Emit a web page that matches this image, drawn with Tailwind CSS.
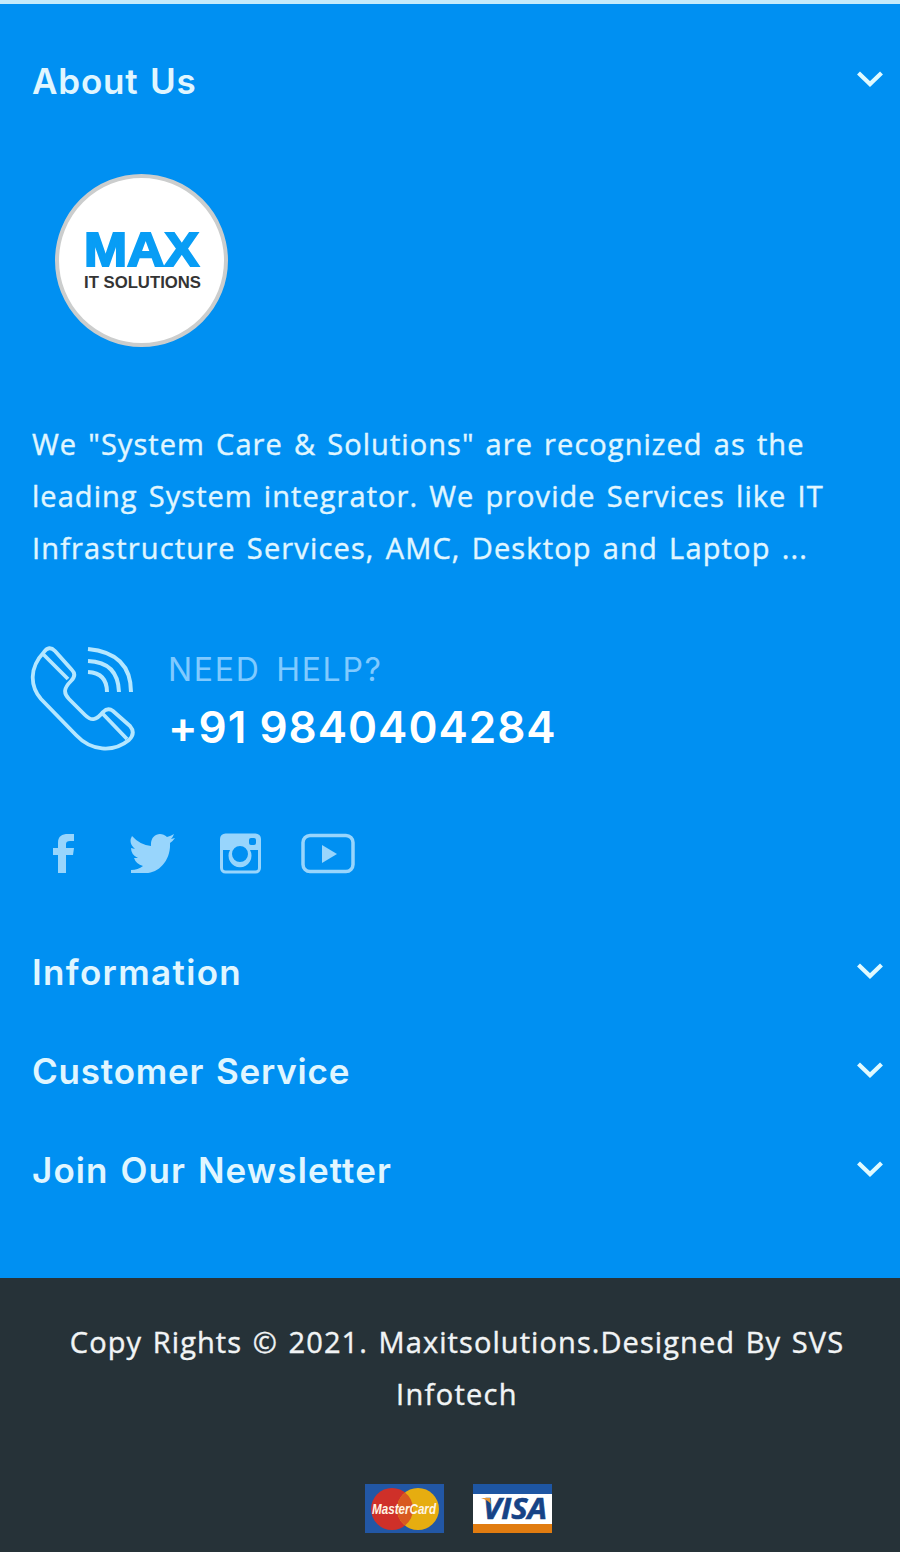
<!DOCTYPE html>
<html lang="en">
<head>
<meta charset="utf-8">
<title>Max IT Solutions</title>
<script src="https://cdn.jsdelivr.net/npm/@tailwindcss/browser@4"></script>
</head>
<body class="w-[900px] h-[1552px] overflow-hidden bg-[#0090f2] font-['Open_Sans',sans-serif] text-[#e0f6ff]">
<footer class="flex h-full flex-col border-t-4 border-[#c5ebfb]">
  <section class="flex h-[1274px] flex-col">
    <div class="mt-[49px] flex h-14 items-center justify-between pl-8 pr-4">
      <h2 class="whitespace-nowrap font-['Inter',sans-serif] text-[35px] font-semibold tracking-[0.8px] [word-spacing:2px]">About Us</h2>
      <svg class="mb-1 h-7 w-7" viewBox="0 0 28 28" fill="none" stroke="#e0faff" stroke-width="4.2"><path d="M2.500 8 14 19 25.500 8"/></svg>
    </div>
    <div class="ml-[55px] mt-[65px] flex h-[173px] w-[173px] flex-col items-center justify-center rounded-full border-4 border-[#cbcdcd] bg-white">
      <svg class="h-[64px] w-[124px] overflow-visible" viewBox="-2 0 124 64" font-family="Liberation Sans, sans-serif" font-weight="700">
        <text x="2" y="37" font-size="48" textLength="115" lengthAdjust="spacingAndGlyphs" fill="#089df5" stroke="#089df5" stroke-width="2">MAX</text>
        <text x="2" y="59" font-size="17" textLength="117" lengthAdjust="spacingAndGlyphs" fill="#343434">IT SOLUTIONS</text>
      </svg>
    </div>
    <div class="mt-[71px] pl-8 text-[29px] leading-[52px] whitespace-nowrap [word-spacing:2.5px] [-webkit-text-stroke:0.4px_#e0f6ff]">
      <p class="tracking-[1.06px]">We "System Care &amp; Solutions" are recognized as the</p>
      <p class="tracking-[1.05px]">leading System integrator. We provide Services like IT</p>
      <p class="tracking-[1.15px]">Infrastructure Services, AMC, Desktop and Laptop ...</p>
    </div>
    <div class="mt-[70px] flex h-[108px] items-start pl-[30px]">
      <svg class="h-[108px] w-[108px]" viewBox="0 0 108 108" fill="none" stroke="#b5e7ff" stroke-width="3.800" stroke-linejoin="round">
        <path d="M14 8C-1 24 0 42 11 55L46 91C61 107 83 109 99 96Q106 89 100 82L83 67Q78 63 73 68C66 77 61 77 55 71L39 55C33 49 34 44 41 37Q47 31 42 26L25 7Q19 1 14 8Z"/>
        <path d="M13 10 38 35M72 69 97 95"/>
        <path stroke-width="4" d="M58 5Q101 9 101 48M58 17Q88 18 89 48M58 28Q77 29 77 48"/>
      </svg>
      <div class="ml-[30px] whitespace-nowrap">
        <p class="flex h-[52px] items-center font-['Inter',sans-serif] text-[32px] tracking-[1.7px] text-[#80caff] [word-spacing:5px]">NEED HELP?</p>
        <p class="flex h-[62px] items-center font-['Inter',sans-serif] text-[44px] font-semibold tracking-[1px] text-white">+91 9840404284</p>
      </div>
    </div>
    <div class="mt-[78px] flex h-[46px] items-center pl-[53px] text-[#98d5fc]">
      <svg class="h-10 w-[22px]" viewBox="0 0 22 40" fill="currentColor"><path d="M5 40V22H0V15H5V10C5 3 9 1 15 1H21V8H17Q13 8 13 11V15H21L20 22H13V40Z"/></svg>
      <svg class="ml-[54px] h-10 w-[46px]" viewBox="0 0 46 40" fill="currentColor"><path d="M46 5Q44 8 41 10C42 27 30 40 17 40H2V37Q9 37 14 33Q7 31 5 25H9Q2 22 2 15L6 16Q-1 10 3 3Q11 12 22 13C21 1 32-2 38 4Q42 3 45 1Q44 4 42 6Z"/></svg>
      <svg class="ml-[45px] h-[41px] w-[41px]" viewBox="0 0 41 41"><rect x="1.500" y="2" width="38" height="37" rx="4" fill="none" stroke="currentColor" stroke-width="3"/><path fill="currentColor" fill-rule="evenodd" d="M2 2H39V17H30A11.500 11.500 0 1 1 10 17H2ZM31 5Q29 5 29 7V10Q29 12 31 12H34Q36 12 36 10V7Q36 5 34 5ZM20 13A8 8 0 1 0 20 29A8 8 0 1 0 20 13Z"/></svg>
      <svg class="ml-10 h-[41px] w-[54px]" viewBox="0 0 54 41"><rect x="2" y="2.500" width="50" height="36" rx="7" fill="none" stroke="currentColor" stroke-width="3.500"/><path d="M21 12 36 21 21 30Z" fill="currentColor"/></svg>
    </div>
    <div class="mt-[47px] flex flex-col font-['Inter',sans-serif]">
      <div class="flex h-[99px] items-center justify-between pl-8 pr-4"><h2 class="whitespace-nowrap text-[35px] font-semibold tracking-[1.35px]">Information</h2><svg class="mb-1 h-7 w-7" viewBox="0 0 28 28" fill="none" stroke="#e0faff" stroke-width="4.200"><path d="M2.500 8 14 19 25.500 8"/></svg></div>
      <div class="flex h-[99px] items-center justify-between pl-8 pr-4"><h2 class="whitespace-nowrap text-[35px] font-semibold tracking-[0.8px] [word-spacing:2px]">Customer Service</h2><svg class="mb-1 h-7 w-7" viewBox="0 0 28 28" fill="none" stroke="#e0faff" stroke-width="4.200"><path d="M2.500 8 14 19 25.500 8"/></svg></div>
      <div class="flex h-[99px] items-center justify-between pl-8 pr-4"><h2 class="whitespace-nowrap text-[35px] font-semibold tracking-[1.1px] [word-spacing:2px]">Join Our Newsletter</h2><svg class="mb-1 h-7 w-7" viewBox="0 0 28 28" fill="none" stroke="#e0faff" stroke-width="4.200"><path d="M2.500 8 14 19 25.500 8"/></svg></div>
    </div>
  </section>
  <section class="h-[274px] bg-[#263238] pt-[38px] text-white">
    <div class="pl-[14px] text-center text-[29px] leading-[52px] whitespace-nowrap text-[#f1f4f5] [word-spacing:2px] [-webkit-text-stroke:0.4px_#f1f4f5]">
      <p class="tracking-[1.08px]">Copy Rights © 2021. Maxitsolutions.Designed By SVS</p>
      <p class="tracking-[1.3px]">Infotech</p>
    </div>
    <div class="mt-16 flex gap-[29px] pl-[365px]">
      <svg class="h-[49px] w-[79px]" viewBox="0 0 79 49"><path fill="#2257a5" d="M0 0H79V49H0Z"/><circle cx="27" cy="25" r="21" fill="#cf3029"/><circle cx="53" cy="25" r="21" fill="#e6ad10"/><path d="M40 8.500A21 21 0 0 1 40 41.500A21 21 0 0 1 40 8.500Z" fill="#d85920"/><text x="7" y="30" font-family="Liberation Sans, sans-serif" font-style="italic" font-weight="700" font-size="14" textLength="64" lengthAdjust="spacingAndGlyphs" fill="#fff4e4">MasterCard</text></svg>
      <svg class="h-[49px] w-[79px]" viewBox="0 0 79 49"><path fill="#fff" d="M0 0H79V49H0Z"/><path fill="#1e56a3" d="M0 0H79V10H0Z"/><path fill="#e17c10" d="M0 40H79V49H0Z"/><text x="10" y="35" font-family="Open Sans, sans-serif" font-style="italic" font-weight="700" font-size="29" textLength="64" lengthAdjust="spacingAndGlyphs" fill="#164386" stroke="#164386" stroke-width=".6">VISA</text><path fill="#e99832" d="M8 14H17L18 20Q15 16 8 14Z"/></svg>
    </div>
  </section>
</footer>
</body>
</html>
